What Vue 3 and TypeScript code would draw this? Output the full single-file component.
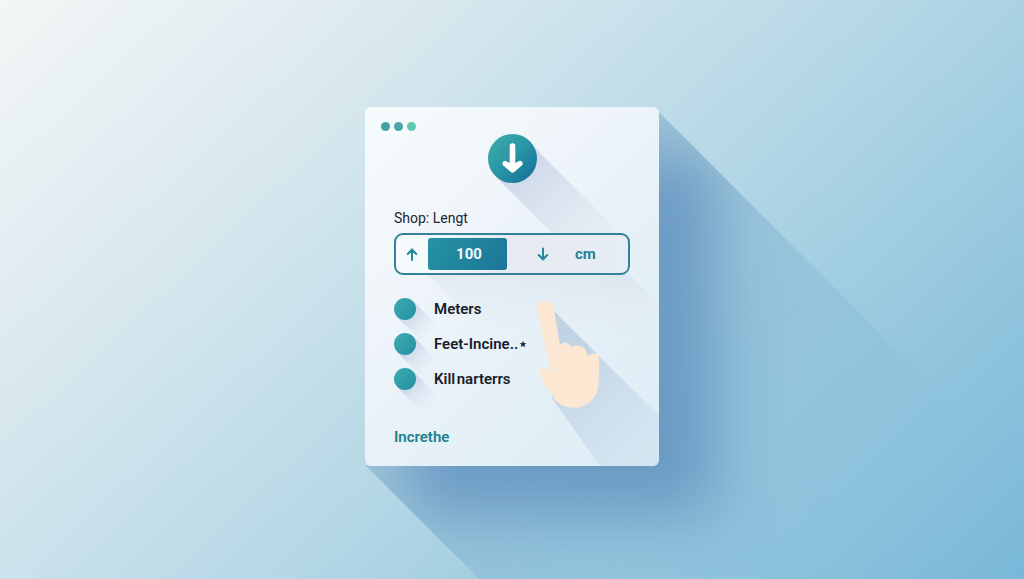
<script setup lang="ts">
import { ref } from 'vue'

interface Unit {
  id: string
  label: string
  mark?: string
}

const dots = ['#45a39f', '#4aa3ab', '#5fcab2']
const units: Unit[] = [
  { id: 'meters', label: 'Meters' },
  { id: 'feet', label: 'Feet-Incine..', mark: '⋆' },
  { id: 'kilo', label: 'Kill\u200anarterrs' },
]

const amount = ref('100')
const selected = ref('meters')
const scale = ref('cm')

function step(by: number) {
  amount.value = String((Number(amount.value) || 0) + by)
}
</script>

<template>
  <main class="scene">
    <div class="stage">
      <svg class="cast" width="694" height="759" viewBox="0 0 694 759" aria-hidden="true">
        <defs>
          <linearGradient id="castFade" gradientUnits="userSpaceOnUse" x1="147" y1="180" x2="447" y2="480">
            <stop offset="0" stop-color="#5d93bd" stop-opacity=".3" />
            <stop offset=".5" stop-color="#6ba6c8" stop-opacity=".26" />
            <stop offset="1" stop-color="#7cb8d8" stop-opacity="0" />
          </linearGradient>
          <clipPath id="castShape"><path d="M290 1L694 405V759H401L1 359Z" /></clipPath>
          <filter id="soft" filterUnits="userSpaceOnUse" x="-100" y="-100" width="700" height="760">
            <feGaussianBlur stdDeviation="31" />
          </filter>
        </defs>
        <g clip-path="url(#castShape)">
          <path d="M290 1L694 405V759H401L1 359Z" fill="url(#castFade)" />
          <rect x="42" y="48" width="308" height="360" fill="#5b8cbc" opacity=".74" filter="url(#soft)" />
        </g>
      </svg>

      <section class="card">
        <svg class="shades" width="294" height="359" viewBox="0 0 294 359" aria-hidden="true">
          <defs>
            <linearGradient id="badgeFade" gradientUnits="userSpaceOnUse" x1="147" y1="52" x2="244" y2="149">
              <stop offset="0" stop-color="#c3cfe4" stop-opacity=".85" />
              <stop offset=".5" stop-color="#d3ddea" stop-opacity=".6" />
              <stop offset="1" stop-color="#dbe5ee" stop-opacity=".1" />
            </linearGradient>
            <linearGradient id="fieldFade" x1="0" y1="0" x2="0" y2="1">
              <stop offset="0" stop-color="#d8dfeb" stop-opacity=".5" />
              <stop offset="1" stop-color="#dfe6f1" stop-opacity="0" />
            </linearGradient>
            <linearGradient id="dotFade" gradientUnits="userSpaceOnUse" x1="0" y1="0" x2="26" y2="26">
              <stop offset="0" stop-color="#b9cade" stop-opacity=".85" />
              <stop offset="1" stop-color="#d5e0ee" stop-opacity="0" />
            </linearGradient>
            <linearGradient id="handFade" gradientUnits="userSpaceOnUse" x1="200" y1="255" x2="285" y2="340">
              <stop offset="0" stop-color="#b9cbe1" stop-opacity=".8" />
              <stop offset="1" stop-color="#cddfed" stop-opacity=".5" />
            </linearGradient>
          </defs>
          <path d="M164 35L286 157L252 191L130 69Z" fill="url(#badgeFade)" />
          <path d="M62 167H264L294 197V232H127Z" fill="url(#fieldFade)" />
          <g fill="url(#dotFade)">
            <path transform="translate(40 202)" d="M8-8L38 22L22 38L-8 8Z" />
            <path transform="translate(40 237)" d="M8-8L38 22L22 38L-8 8Z" />
            <path transform="translate(40 272)" d="M8-8L38 22L22 38L-8 8Z" />
          </g>
          <path d="M187 202L294 309V359H235L187 291Z" fill="url(#handFade)" />
        </svg>

        <div class="dots">
          <span v-for="c in dots" :key="c" class="dot" :style="{ background: c }"></span>
        </div>

        <div class="badge">
          <svg width="49" height="49" viewBox="0 0 49 49" aria-hidden="true">
            <path d="M24.500 12V34" stroke="#fff" stroke-width="5.600" stroke-linecap="round" />
            <path d="M17 29.500L24.500 36L32 29.500L24.500 33Z" fill="#fff" stroke="#fff" stroke-width="5.200" stroke-linecap="round" stroke-linejoin="round" />
          </svg>
        </div>

        <form class="body" @submit.prevent>
          <label class="title" for="amount">Shop: Lengt</label>
          <div class="field">
            <button class="step up" type="button" aria-label="Increase" @click="step(1)">
              <svg width="12" height="14" viewBox="0 0 12 14" aria-hidden="true">
                <path d="M6 13V2.500M1.800 7L6 2.500L10.200 7" />
              </svg>
            </button>
            <input id="amount" v-model="amount" class="amount" type="text" inputmode="numeric" />
            <button class="step down" type="button" aria-label="Decrease" @click="step(-1)">
              <svg width="12" height="14" viewBox="0 0 12 14" aria-hidden="true">
                <path d="M6 1.500V12M1.800 8L6 12.500L10.200 8" />
              </svg>
            </button>
            <select v-model="scale" class="scale" aria-label="Unit">
              <option>cm</option>
            </select>
          </div>

          <div class="units">
            <label v-for="u in units" :key="u.id" class="unit">
              <input v-model="selected" type="radio" name="unit" :value="u.id" />
              <span>{{ u.label }}<span v-if="u.mark" class="mark">{{ u.mark }}</span></span>
            </label>
          </div>

          <button class="action" type="submit">Increthe</button>
        </form>

        <svg class="hand" width="62" height="109" viewBox="79 59 186 327" aria-hidden="true">
          <path
            d="M80 88C78 72 89 62 103 62C117 62 127 71 130 86L148 195C156 184 174 185 181 200C195 193 219 195 226 211C229 217 230 223 232 228C240 219 259 215 265 226C267 249 264 275 264 304C263 350 232 382 190 382C153 382 135 365 126 347C114 324 103 319 96 300C92 288 84 277 87 267C91 262 111 264 121 270C119 252 113 234 108 213Z"
            fill="#fce7d2" />
        </svg>
      </section>
    </div>
  </main>
</template>

<style>
body {
  margin: 0;
}
</style>

<style scoped>
.scene {
  box-sizing: border-box;
  min-height: 100vh;
  display: grid;
  grid-template-columns: minmax(0, 294px);
  place-content: center;
  padding: 16px 16px 22px;
  overflow: hidden;
  background: linear-gradient(137deg, #f3f7f6 0%, #e5eef2 15%, #d8e8ee 27%, #cae2eb 38%, #bedbe8 48%, #b2d6e5 57%, #a2cee1 68%, #92c5dd 80%, #79b8d9 100%);
  font-family: Roboto, "Liberation Sans", sans-serif;
  font-size: 15px;
  line-height: 20px;
  color: #1c2630;
}
.stage {
  position: relative;
}
.cast {
  position: absolute;
  top: 0;
  left: 0;
}
.card {
  position: relative;
  box-sizing: border-box;
  padding: 15px 16px 19px;
  border-radius: 6px;
  overflow: hidden;
  background: linear-gradient(135deg, #f6fbfc 0%, #eff5fa 35%, #e6f0f7 62%, #dcedf6 100%);
}
.shades {
  position: absolute;
  top: 0;
  left: 0;
}
.dots {
  position: relative;
  display: flex;
  gap: 4px;
}
.dot {
  width: 9px;
  height: 9px;
  border-radius: 50%;
}
.badge {
  position: relative;
  width: 49px;
  height: 49px;
  margin: 3px auto 0;
  border-radius: 50%;
  background: linear-gradient(135deg, #38a6a8 15%, #2995a6 50%, #177399 90%);
}
.badge svg {
  display: block;
}
.body {
  position: relative;
  padding: 25px 13px 0;
}
.title {
  display: block;
  font-size: 14px;
}
.field {
  box-sizing: border-box;
  display: flex;
  align-items: center;
  height: 42px;
  margin-top: 5px;
  border: 2px solid #34829a;
  border-radius: 9px;
  background: linear-gradient(90deg, #f5fafc 12%, #e6ebf2 50%, #e7edf4 100%);
}
button,
input,
select {
  margin: 0;
  padding: 0;
  border: 0;
  background: none;
  color: inherit;
  font: inherit;
}
.step {
  display: grid;
  place-items: center;
  height: 32px;
}
.step path {
  fill: none;
  stroke: #26889a;
  stroke-width: 2;
  stroke-linecap: round;
  stroke-linejoin: round;
}
.up {
  width: 32px;
}
.down {
  width: 64px;
  margin-left: 4px;
}
.amount {
  box-sizing: border-box;
  width: 79px;
  min-width: 0;
  height: 32px;
  border-radius: 3px;
  background: linear-gradient(125deg, #2593a2, #1c7598);
  color: #f2fbfd;
  font-weight: 700;
  text-align: center;
  padding-left: 3px;
}
.scale {
  appearance: none;
  color: #26819b;
  font-weight: 700;
}
.units {
  margin-top: 16px;
}
.unit {
  display: flex;
  align-items: center;
  gap: 18px;
  height: 35px;
  font-weight: 600;
  color: #18202a;
}
.unit input {
  appearance: none;
  width: 22px;
  height: 22px;
  border-radius: 50%;
  background: linear-gradient(135deg, #3badb0, #258fa2);
}
.mark {
  font-family: "DejaVu Sans", sans-serif;
}
.action {
  display: block;
  margin-top: 31px;
  color: #20808f;
  font-weight: 600;
}
.hand {
  position: absolute;
  top: 193px;
  left: 172px;
}
</style>
